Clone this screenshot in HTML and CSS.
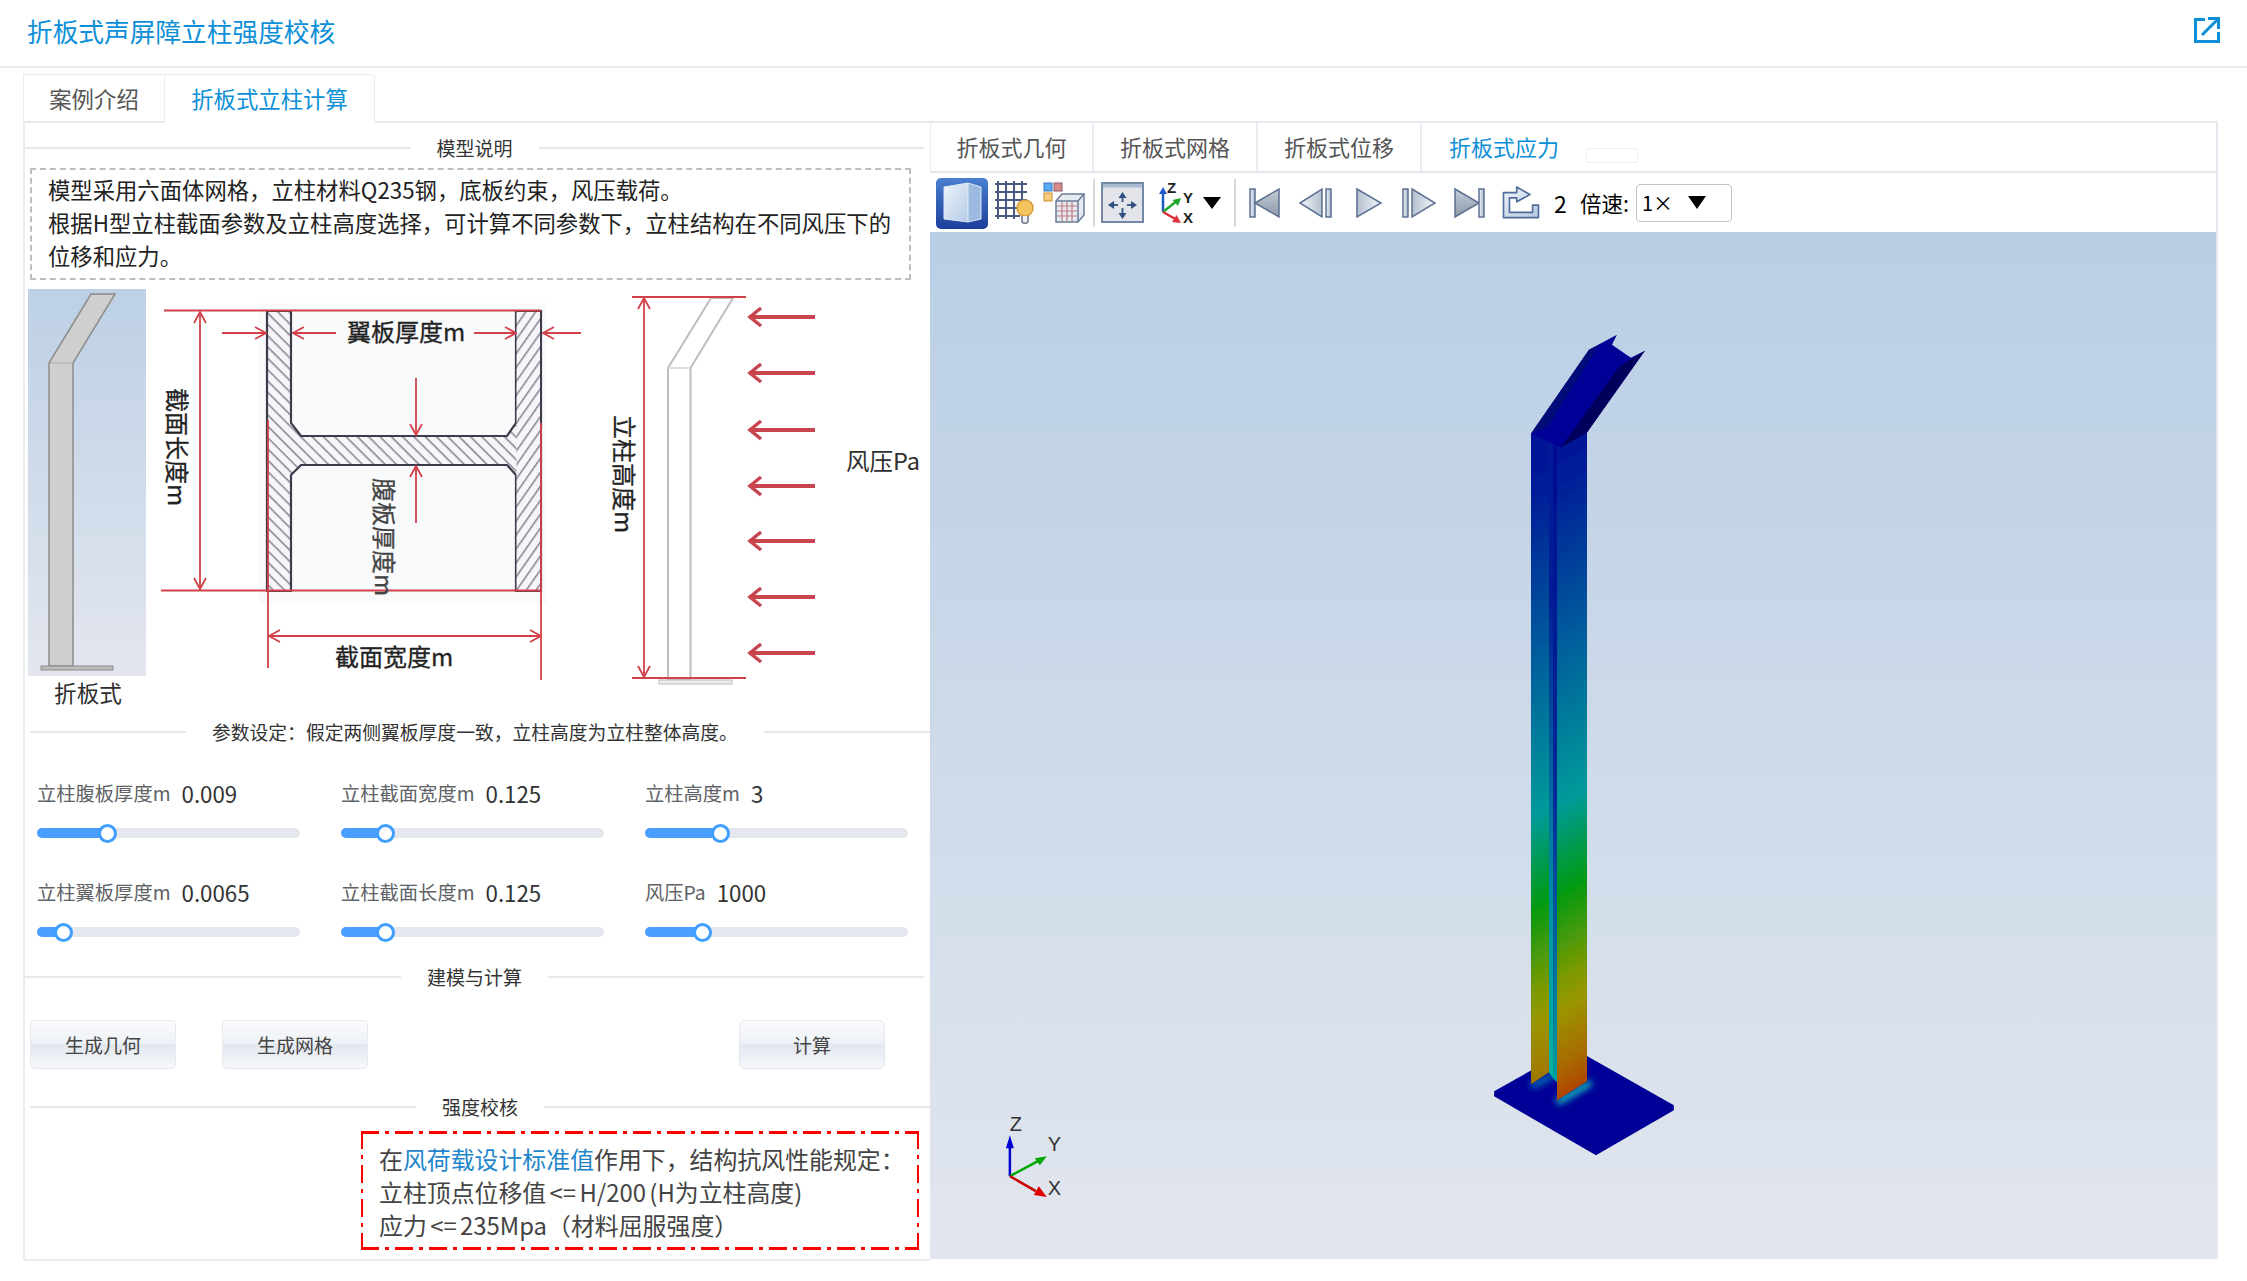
FILE: index.html
```html
<!DOCTYPE html>
<html lang="zh">
<head>
<meta charset="utf-8">
<title>折板式声屏障立柱强度校核</title>
<link rel="stylesheet" href="styles.css">
</head>
<body>
<header class="top">
  <h1 class="title">折板式声屏障立柱强度校核</h1>
  <svg class="open-icon" viewBox="0 0 26 26"><path d="M11 2.500H1.500V24.500H24.500V15" fill="none" stroke="#0d8fd8" stroke-width="3"/><path d="M8 18L23 3M14 1.500H24.500V12" fill="none" stroke="#0d8fd8" stroke-width="3"/></svg>
</header>
<nav class="main-tabs">
  <div class="tab">案例介绍</div>
  <div class="tab tab-on">折板式立柱计算</div>
</nav>
<main class="work">
  <section class="left">
    <div class="divider d-model"><span class="line"></span><span class="dt">模型说明</span><span class="line"></span></div>
    <div class="intro">模型采用六面体网格，立柱材料Q235钢，底板约束，风压载荷。<br>根据H型立柱截面参数及立柱高度选择，可计算不同参数下，立柱结构在不同风压下的<br>位移和应力。</div>

    <svg class="figure" viewBox="24 285 906 427">
      <defs>
        <linearGradient id="thumbBg" x1="0" y1="0" x2="0" y2="1"><stop offset="0" stop-color="#bdd0e6"/><stop offset="1" stop-color="#e3e6ee"/></linearGradient>
        <pattern id="hatch" width="8" height="8" patternUnits="userSpaceOnUse" patternTransform="rotate(45)"><rect width="8" height="8" fill="#f6f5f9"/><rect width="8" height="1.500" fill="#85828f"/></pattern>
        <pattern id="hatchB" width="8" height="8" patternUnits="userSpaceOnUse" patternTransform="rotate(-55)"><rect width="8" height="8" fill="#f6f5f9"/><rect width="8" height="1.500" fill="#85828f"/></pattern>
        <marker id="aEnd" viewBox="0 0 14 14" refX="13" refY="7" markerWidth="14" markerHeight="14" orient="auto-start-reverse" markerUnits="userSpaceOnUse"><path d="M2 1L13 7L2 13" fill="none" stroke="#d2404a" stroke-width="1.800"/></marker>
        <marker id="aBig" viewBox="0 0 18 22" refX="16" refY="11" markerWidth="18" markerHeight="22" orient="auto" markerUnits="userSpaceOnUse"><path d="M4 2L15 11L4 20" fill="none" stroke="#c9454f" stroke-width="3.500"/></marker>
      </defs>

      <rect x="27" y="289" width="118" height="387" fill="url(#thumbBg)"/>
      <path d="M48 363L90 294H114L72 363V666H48Z" fill="#cfcfcf" stroke="#8c8c8c" stroke-width="1.500"/>
      <path d="M48 363H72" stroke="#aaa" stroke-width="1"/>
      <rect x="40" y="666" width="72" height="4" fill="#bdbdbd" stroke="#8c8c8c"/>
      <text class="fig-cap" x="87" y="702" text-anchor="middle">折板式</text>

      <rect x="258" y="303" width="288" height="300" fill="#f9fafc"/>
      <path d="M266 311H290V423L300 436H506L515 423V311H540V591H515V475L506 465H300L290 475V591H266Z" fill="url(#hatch)" stroke="#3e3c4c" stroke-width="2.200"/>
      <path d="M515.500 312H539V590H515.500Z" fill="url(#hatchB)"/>
      <g class="red-thin">
        <path d="M163 310.500H540M160 590.500H540M267 420V668M540 423V680"/>
        <path d="M199 312V589" marker-start="url(#aEnd)" marker-end="url(#aEnd)"/>
        <path d="M221 333H265" marker-end="url(#aEnd)"/>
        <path d="M335 333H292" marker-end="url(#aEnd)"/>
        <path d="M473 333H515" marker-end="url(#aEnd)"/>
        <path d="M580 333H542" marker-end="url(#aEnd)"/>
        <path d="M415 378V435" marker-end="url(#aEnd)"/>
        <path d="M415 523V466" marker-end="url(#aEnd)"/>
        <path d="M268 636H540" marker-start="url(#aEnd)" marker-end="url(#aEnd)"/>
      </g>
      <text class="fig-text" x="346" y="341">翼板厚度m</text>
      <text class="fig-text" x="334" y="666">截面宽度m</text>
      <text class="fig-text" transform="translate(167 388) rotate(90)">截面长度m</text>
      <text class="fig-text fig-gray" transform="translate(374 478) rotate(90)">腹板厚度m</text>
      <text class="fig-text" transform="translate(614 415) rotate(90)">立柱高度m</text>

      <path d="M667 368L710 298H732L689.500 368V679H667Z" fill="#fff" stroke="#bdbdbd" stroke-width="2"/>
      <path d="M667 368H689" stroke="#ddd" stroke-width="2"/>
      <rect x="658" y="680" width="73" height="4" fill="#eee" stroke="#bbb"/>
      <g class="red-thin">
        <path d="M631 297H745M631 678H745"/>
        <path d="M643 298V677" marker-start="url(#aEnd)" marker-end="url(#aEnd)"/>
      </g>
      <g class="wind">
        <path d="M814 317H748" marker-end="url(#aBig)"/>
        <path d="M814 373H748" marker-end="url(#aBig)"/>
        <path d="M814 430H748" marker-end="url(#aBig)"/>
        <path d="M814 486H748" marker-end="url(#aBig)"/>
        <path d="M814 541H748" marker-end="url(#aBig)"/>
        <path d="M814 597H748" marker-end="url(#aBig)"/>
        <path d="M814 653H748" marker-end="url(#aBig)"/>
      </g>
      <text class="fig-cap fig-wind" x="845" y="470">风压Pa</text>
    </svg>

    <div class="divider d-params"><span class="line"></span><span class="dt">参数设定：假定两侧翼板厚度一致，立柱高度为立柱整体高度。</span><span class="line"></span></div>

    <div class="sliders">
      <div class="slider"><div class="s-head"><span class="s-label">立柱腹板厚度m</span><span class="s-val">0.009</span></div><div class="track"><div class="fill" style="width:70px"></div><span class="knob"></span></div></div>
      <div class="slider"><div class="s-head"><span class="s-label">立柱截面宽度m</span><span class="s-val">0.125</span></div><div class="track"><div class="fill" style="width:44px"></div><span class="knob"></span></div></div>
      <div class="slider"><div class="s-head"><span class="s-label">立柱高度m</span><span class="s-val">3</span></div><div class="track"><div class="fill" style="width:75px"></div><span class="knob"></span></div></div>
      <div class="slider"><div class="s-head"><span class="s-label">立柱翼板厚度m</span><span class="s-val">0.0065</span></div><div class="track"><div class="fill" style="width:26px"></div><span class="knob"></span></div></div>
      <div class="slider"><div class="s-head"><span class="s-label">立柱截面长度m</span><span class="s-val">0.125</span></div><div class="track"><div class="fill" style="width:44px"></div><span class="knob"></span></div></div>
      <div class="slider"><div class="s-head"><span class="s-label">风压Pa</span><span class="s-val">1000</span></div><div class="track"><div class="fill" style="width:57px"></div><span class="knob"></span></div></div>
    </div>

    <div class="divider d-build"><span class="line"></span><span class="dt">建模与计算</span><span class="line"></span></div>
    <div class="actions">
      <button class="btn">生成几何</button>
      <button class="btn">生成网格</button>
      <button class="btn btn-end">计算</button>
    </div>
    <div class="divider d-check"><span class="line"></span><span class="dt">强度校核</span><span class="line"></span></div>
    <div class="notice">在<span class="link">风荷载设计标准值</span>作用下，结构抗风性能规定：<br>立柱顶点位移值 &lt;= H/200 (H为立柱高度)<br>应力 &lt;= 235Mpa（材料屈服强度）</div>
  </section>

  <section class="right">
    <div class="sub-tabs">
      <div class="sub-tab">折板式几何</div>
      <div class="sub-tab">折板式网格</div>
      <div class="sub-tab">折板式位移</div>
      <div class="sub-tab sub-on">折板式应力</div>
      <div class="sub-stub"></div>
    </div>
    <div class="toolbar">
      <svg class="tool t-view" viewBox="0 0 52 51">
        <defs>
          <linearGradient id="viewBg" x1="0" y1="0" x2="0" y2="1"><stop offset="0" stop-color="#4a7fd0"/><stop offset="1" stop-color="#1d3f9c"/></linearGradient>
          <linearGradient id="faceA" x1="0" y1="0" x2="1" y2="1"><stop offset="0" stop-color="#eef4fb"/><stop offset="1" stop-color="#b4cbe6"/></linearGradient>
          <linearGradient id="navDark" x1="0" y1="0" x2="0" y2="1"><stop offset="0" stop-color="#c4ccd6"/><stop offset="1" stop-color="#8c98a8"/></linearGradient>
          <linearGradient id="navLight" x1="0" y1="0" x2="1" y2="0"><stop offset="0" stop-color="#f2f5f9"/><stop offset="1" stop-color="#b4c0d0"/></linearGradient>
          <linearGradient id="navLightR" x1="0" y1="0" x2="1" y2="0"><stop offset="0" stop-color="#b4c0d0"/><stop offset="1" stop-color="#f2f5f9"/></linearGradient>
          <linearGradient id="barFill" x1="0" y1="0" x2="1" y2="0"><stop offset="0" stop-color="#eef2f7"/><stop offset="1" stop-color="#aab8cc"/></linearGradient>
          <linearGradient id="expFill" x1="0" y1="0" x2="1" y2="1"><stop offset="0" stop-color="#f0f4f9"/><stop offset="1" stop-color="#b4c8e2"/></linearGradient>
        </defs>
        <rect width="52" height="51" rx="5" fill="url(#viewBg)"/>
        <path d="M8 9L32 5V44L8 41Z" fill="url(#faceA)" stroke="#dbe6f4"/>
        <path d="M32 5L45 9V41L32 44Z" fill="#9dbbe0" stroke="#dbe6f4"/>
      </svg>
      <svg class="tool t-mesh" viewBox="0 0 41 43">
        <path d="M1 3H33M1 11H33M1 19H33M1 27H30M1 35H26M4 0V38M12 0V38M20 0V38M28 0V30" fill="none" stroke="#48587e" stroke-width="2"/>
        <circle cx="31" cy="27" r="8" fill="#f3c45c" stroke="#d89a3c" stroke-width="1.500"/>
        <path d="M28 35V40C28 43 34 43 34 40V35" fill="#eef0f4" stroke="#6b7286" stroke-width="1.500"/>
      </svg>
      <svg class="tool t-cube" viewBox="0 0 43 41">
        <rect x="1" y="1" width="8" height="8" fill="#5aaaf0" stroke="#3a78c0"/>
        <rect x="11" y="1" width="8" height="8" fill="#d88a8a" stroke="#8a5a6a"/>
        <rect x="1" y="11" width="8" height="8" fill="#f5cf80" stroke="#d88a30"/>
        <path d="M13 19L19 12H41V33L35 40H13Z" fill="#e6ebf2" stroke="#6b7b94" stroke-width="1.500"/>
        <path d="M13 19H35V40M35 19L41 12" fill="none" stroke="#6b7b94" stroke-width="1.500"/>
        <path d="M14 24H34M14 29H34M14 34H34M19 20V39M24 20V39M29 20V39" stroke="#bf7a80" stroke-width="1.200"/>
      </svg>
      <span class="tool-sep s-a"></span>
      <svg class="tool t-fit" viewBox="0 0 43 41">
        <rect x="1" y="1" width="41" height="39" fill="#e2e4ea" stroke="#7488a8" stroke-width="2"/>
        <rect x="2" y="2" width="39" height="3.500" fill="#a9b9d2"/>
        <path d="M21.500 14V20M21.500 26V32M11 23H17M26 23H32" stroke="#3f5e8a" stroke-width="2"/>
        <path d="M21.500 10L25.500 16H17.500ZM21.500 37L25.500 31H17.500ZM7 23L13 19V27ZM36 23L30 19V27Z" fill="#2f4f7e"/>
      </svg>
      <svg class="tool t-axes" viewBox="0 0 35 42">
        <path d="M4 30V10" stroke="#1f5ac8" stroke-width="2.500"/><path d="M4 5L8 12H0Z" fill="#1f5ac8"/>
        <path d="M4 30L19 18" stroke="#1ea82a" stroke-width="2.500"/><path d="M22 16L19 24L13.500 18Z" fill="#1ea82a"/>
        <path d="M4 30L18 38" stroke="#e0303a" stroke-width="2.500"/><path d="M22 41L13 40L17.500 33Z" fill="#e0303a"/>
        <text class="axis-mini" x="8" y="11">Z</text><text class="axis-mini" x="24" y="21">Y</text><text class="axis-mini" x="24" y="41">X</text>
      </svg>
      <svg class="tool t-tri" viewBox="0 0 18 12"><path d="M0 0H18L9 12Z" fill="#000"/></svg>
      <span class="tool-sep s-b"></span>
      <svg class="tool t-nav t-first" viewBox="0 0 31 30"><rect x="1" y="1" width="5" height="28" fill="url(#barFill)" stroke="#5c7092" stroke-width="1.500"/><path d="M6 15L30 1V29Z" fill="url(#navDark)" stroke="#5c7092" stroke-width="1.500"/></svg>
      <svg class="tool t-nav t-prev" viewBox="0 0 34 30"><path d="M1 15L23 1V29Z" fill="url(#navLight)" stroke="#5c7092" stroke-width="1.500"/><rect x="27" y="1" width="5" height="28" fill="url(#barFill)" stroke="#5c7092" stroke-width="1.500"/></svg>
      <svg class="tool t-nav t-play" viewBox="0 0 26 30"><path d="M1 1L25 15L1 29Z" fill="url(#navLightR)" stroke="#5c7092" stroke-width="1.500"/></svg>
      <svg class="tool t-nav t-next" viewBox="0 0 34 30"><rect x="1" y="1" width="5" height="28" fill="url(#barFill)" stroke="#5c7092" stroke-width="1.500"/><path d="M10 1L33 15L10 29Z" fill="url(#navLightR)" stroke="#5c7092" stroke-width="1.500"/></svg>
      <svg class="tool t-nav t-last" viewBox="0 0 31 30"><path d="M1 1L25 15L1 29Z" fill="url(#navDark)" stroke="#5c7092" stroke-width="1.500"/><rect x="25" y="1" width="5" height="28" fill="url(#barFill)" stroke="#5c7092" stroke-width="1.500"/></svg>
      <svg class="tool t-export" viewBox="8 12 114 100"><path d="M12 32H52V15L92 38L52 60V48H30V92H100V70H118V108H12Z" fill="url(#expFill)" stroke="#4f6d9a" stroke-width="5" stroke-linejoin="round"/></svg>
      <span class="frame">2</span>
      <span class="speed">倍速:</span>
      <div class="select"><span class="sel-val">1×</span><svg class="sel-tri" viewBox="0 0 18 13"><path d="M0 0H18L9 13Z" fill="#000"/></svg></div>
    </div>
    <div class="viewport">
      <svg class="scene" viewBox="930 232 1288 1029" preserveAspectRatio="none">
        <defs>
          <linearGradient id="stressR" gradientUnits="userSpaceOnUse" x1="1573" y1="340" x2="1910" y2="902">
            <stop offset="0" stop-color="#000096"/><stop offset="0.18" stop-color="#001e98"/><stop offset="0.38" stop-color="#005a9c"/><stop offset="0.6" stop-color="#009a9a"/><stop offset="0.72" stop-color="#059a10"/><stop offset="0.83" stop-color="#7c9a02"/><stop offset="0.87" stop-color="#9a9600"/><stop offset="0.94" stop-color="#a86c00"/><stop offset="0.985" stop-color="#b04600"/>
          </linearGradient>
          <linearGradient id="stressL" gradientUnits="userSpaceOnUse" x1="1541" y1="357" x2="1878" y2="919">
            <stop offset="0" stop-color="#000096"/><stop offset="0.18" stop-color="#001e98"/><stop offset="0.38" stop-color="#005a9c"/><stop offset="0.6" stop-color="#009a9a"/><stop offset="0.72" stop-color="#059a10"/><stop offset="0.83" stop-color="#7c9a02"/><stop offset="0.87" stop-color="#9a9600"/><stop offset="0.94" stop-color="#a07a00"/><stop offset="0.985" stop-color="#b05000"/>
          </linearGradient>
          <linearGradient id="webLight" gradientUnits="userSpaceOnUse" x1="0" y1="600" x2="0" y2="1085">
            <stop offset="0" stop-color="#001c96"/><stop offset="0.4" stop-color="#006ea0"/><stop offset="0.7" stop-color="#009aa0"/><stop offset="1" stop-color="#00b4a0"/>
          </linearGradient>
          <linearGradient id="webDark" gradientUnits="userSpaceOnUse" x1="0" y1="440" x2="0" y2="1085">
            <stop offset="0" stop-color="#000c92"/><stop offset="0.55" stop-color="#002a96"/><stop offset="0.8" stop-color="#0068a0"/><stop offset="1" stop-color="#00a0a0"/>
          </linearGradient>
          <filter id="soft" x="-5%" y="-5%" width="110%" height="110%"><feGaussianBlur stdDeviation="0.600"/></filter>
          <filter id="glowBlur" x="-50%" y="-100%" width="200%" height="300%"><feGaussianBlur stdDeviation="3.500"/></filter>
        </defs>
        <g filter="url(#soft)">
          <path d="M1495 1093L1573 1049L1675 1107V1112L1597 1157L1495 1098Z" fill="#000096"/>
        </g>
        <path class="glow-a" d="M1558 1104L1592 1084" filter="url(#glowBlur)"/>
        <path class="glow-b" d="M1532 1088L1556 1076" filter="url(#glowBlur)"/>
        <g filter="url(#soft)">
          <path d="M1532 434L1558 425L1588 433V1083L1558 1102V1081L1550 1074L1532 1086Z" fill="#000a96"/>
          <path d="M1532 434H1550V1074L1532 1086Z" fill="url(#stressL)"/>
          <path d="M1550 434H1554V1080L1550 1074Z" fill="url(#webLight)"/>
          <path d="M1554 434H1558V1084L1554 1080Z" fill="url(#webDark)"/>
          <path d="M1558 434H1588V1083L1558 1102Z" fill="url(#stressR)"/>
          <path d="M1532 434L1590 350L1618 335L1613 345L1632 358L1646 351L1588 433L1562 448Z" fill="#000096"/>
          <path d="M1562 448L1620 367L1646 351L1588 433Z" fill="#00065c"/>
          <path d="M1532 434L1590 350L1600 345L1549 427Z" fill="#000c78"/>
        </g>
        <g class="triad">
          <path d="M1010 1178V1145" stroke="#0000d0" stroke-width="2.500"/><path d="M1010 1137L1014 1150H1006Z" fill="#0000d0"/>
          <path d="M1010 1178L1038 1163" stroke="#00a800" stroke-width="2.500"/><path d="M1047 1158L1040 1167L1035 1160Z" fill="#00a800"/>
          <path d="M1010 1178L1036 1193" stroke="#c80000" stroke-width="2.500"/><path d="M1047 1199L1034 1197L1039 1188Z" fill="#e00000"/>
          <text class="axis-label" x="1010" y="1133">Z</text><text class="axis-label" x="1048" y="1153">Y</text><text class="axis-label" x="1048" y="1197">X</text>
        </g>
      </svg>
    </div>
  </section>
</main>
</body>
</html>
```
FILE: styles.css
```css
* { box-sizing: border-box; }
html, body { margin: 0; padding: 0; }
body {
  width: 2247px;
  height: 1281px;
  overflow: hidden;
  background: #fff;
  font-family: "Noto Sans CJK SC", "Noto Sans", sans-serif;
  color: #333;
}

.top {
  height: 68px;
  border-bottom: 2px solid #ececf0;
  padding: 0 27px;
  display: flex;
  align-items: center;
  justify-content: space-between;
}
.title { margin: 0 0 4px; font-size: 25.700px; font-weight: 400; color: #0d8fd8; line-height: 36px; }
.open-icon { width: 26px; height: 26px; margin-bottom: 6px; }

.main-tabs { display: flex; margin: 6px 0 0 23px; height: 49px; width: 2195px; border-bottom: 2px solid #e6e6ee; }
.tab {
  width: 142px;
  height: 49px;
  border: 1px solid #ececf0;
  border-bottom: 2px solid #e6e6ee;
  background: #fff;
  text-align: center;
  font-size: 22.400px;
  line-height: 46px;
  color: #555;
}
.tab + .tab { border-left: 0; }
.tab-on { width: 210px; color: #0d8fd8; border-bottom-color: #fff; border-top-right-radius: 3px; }

.work { display: flex; margin-left: 23px; width: 2195px; height: 1138px; }

.left {
  width: 907px;
  height: 1138px;
  border-left: 2px solid #ececf0;
  border-bottom: 2px solid #ececf0;
  display: flex;
  flex-direction: column;
}

.divider { display: flex; align-items: center; height: 20px; font-size: 19px; color: #333; flex: none; }
.divider .line { flex: 1; height: 2px; background: #e8e8ee; }
.dt { padding: 0 26px; line-height: 20px; white-space: nowrap; }
.d-model { margin-top: 15px; width: 899px; }
.d-params { margin-top: 10px; margin-left: 5px; font-size: 18.800px; }
.d-params .line:first-child { flex: 0 0 156px; }
.d-build { margin-top: 26px; width: 899px; }
.d-check { margin-top: 28px; margin-left: 5px; }

.intro {
  margin: 10px 0 0 5px;
  width: 881px;
  height: 112px;
  flex: none;
  border: 2px dashed #bdbdc2;
  padding: 3px 0 0 16px;
  font-size: 22.350px;
  line-height: 33px;
  color: #222;
  white-space: nowrap;
}

.figure { display: block; width: 906px; height: 427px; margin-top: 5px; flex: none; }
.fig-text { font-size: 24px; font-weight: 400; fill: #222; stroke: #222; stroke-width: 0.300px; font-family: "Noto Sans CJK SC", sans-serif; }
.fig-cap { font-size: 22.600px; fill: #2e2e2e; font-family: "Noto Sans CJK SC", sans-serif; }
.fig-wind { font-size: 23.500px; }
.fig-gray { fill: #444; stroke: #444; }
.red-thin path { fill: none; stroke: #d2404a; stroke-width: 1.800; }
.wind path { fill: none; stroke: #c9454f; stroke-width: 4; }

.sliders {
  display: grid;
  grid-template-columns: repeat(3, 263px);
  column-gap: 41px;
  row-gap: 35px;
  margin: 36px 0 0 12px;
  flex: none;
}
.s-head { height: 30px; display: flex; align-items: center; gap: 11px; }
.s-label { font-size: 19.300px; color: #606266; white-space: nowrap; }
.s-val { font-size: 22.300px; color: #333; }
.track { position: relative; display: flex; align-items: center; height: 10px; margin: 20px 0 4px; background: #e4e7ed; border-radius: 5px; }
.fill { height: 10px; background: #4a9eff; border-radius: 5px 0 0 5px; }
.knob { width: 19px; height: 19px; margin-left: -9px; border: 3px solid #409eff; border-radius: 50%; background: #fff; flex: none; }

.actions { display: flex; gap: 46px; margin-top: 33px; padding: 0 45px 0 5px; height: 49px; flex: none; }
.btn {
  width: 146px;
  height: 49px;
  border: 1px solid #e6e9ef;
  border-radius: 5px;
  background: linear-gradient(#fafbfd 0%, #eef1f6 49%, #e2e7ef 50%, #f6f8fb 100%);
  font-family: inherit;
  font-size: 19px;
  color: #444;
  padding: 0;
}
.btn-end { margin-left: auto; }

.notice {
  width: 558px;
  height: 119px;
  flex: none;
  margin: 14px 0 0 336px;
  padding: 11px 0 0 18px;
  font-size: 23.900px;
  word-spacing: -2px;
  line-height: 33px;
  color: #444;
  white-space: nowrap;
  background:
    repeating-linear-gradient(90deg, #f00 0 18px, transparent 18px 24px, #f00 24px 28px, transparent 28px 34px) top left / 100% 3px no-repeat,
    repeating-linear-gradient(90deg, #f00 0 18px, transparent 18px 24px, #f00 24px 28px, transparent 28px 34px) bottom left / 100% 3px no-repeat,
    repeating-linear-gradient(180deg, #f00 0 18px, transparent 18px 24px, #f00 24px 28px, transparent 28px 34px) top left / 2px 100% no-repeat,
    repeating-linear-gradient(180deg, #f00 0 18px, transparent 18px 24px, #f00 24px 28px, transparent 28px 34px) top right / 2px 100% no-repeat;
}
.link { color: #1f86cc; }

.right {
  width: 1288px;
  height: 1136px;
  display: flex;
  flex-direction: column;
  border-right: 2px solid #e6e6ee;
}
.sub-tabs { display: flex; align-items: flex-end; height: 50px; border-bottom: 2px solid #e6e6ee; flex: none; }
.sub-tab {
  width: 164px;
  height: 48px;
  border-right: 2px solid #ececf0;
  text-align: center;
  font-size: 22px;
  line-height: 47px;
  color: #555;
}
.sub-tab:first-child { border-left: 1px solid #ececf0; }
.sub-on { color: #0d8fd8; border-right: 0; }
.sub-stub { width: 52px; height: 15px; margin: 0 0 8px 0; border: 1px solid #eeeef2; border-radius: 2px; }

.toolbar { display: flex; align-items: center; height: 59px; padding-left: 6px; flex: none; }
.tool { display: block; flex: none; overflow: visible; }
.t-view { width: 52px; height: 51px; margin-top: 2px; }
.t-mesh { width: 41px; height: 43px; margin-left: 6px; }
.t-cube { width: 43px; height: 41px; margin-left: 8px; }
.tool-sep { width: 2px; height: 48px; background: #d8d8dc; flex: none; }
.s-a { margin-left: 7px; }
.t-fit { width: 43px; height: 41px; margin-left: 6px; }
.t-axes { width: 35px; height: 42px; margin-left: 15px; }
.t-tri { width: 18px; height: 12px; margin-left: 9px; }
.s-b { margin-left: 13px; }
.t-nav { height: 30px; }
.t-first { width: 31px; margin-left: 13px; }
.t-prev { width: 34px; margin-left: 19px; }
.t-play { width: 26px; margin-left: 23px; }
.t-next { width: 34px; margin-left: 20px; }
.t-last { width: 31px; margin-left: 18px; }
.t-export { width: 38px; height: 33px; margin-left: 17px; }
.axis-mini { font: 700 15px "Liberation Sans", sans-serif; fill: #222; }
.frame { margin-left: 14px; font-size: 23px; color: #000; width: 26px; flex: none; }
.speed { font-size: 21.500px; color: #000; width: 56px; flex: none; white-space: nowrap; }
.select {
  width: 96px;
  height: 38px;
  border: 1px solid #c4c4c8;
  border-radius: 4px;
  display: flex;
  align-items: center;
  padding-left: 5px;
  font-size: 20px;
  color: #000;
  flex: none;
}
.sel-val { width: 46px; }
.sel-tri { width: 18px; height: 13px; display: block; }

.viewport { flex: 1; background: linear-gradient(#b9cee5 0%, #e2e6ee 100%); min-height: 0; }
.scene { display: block; width: 100%; height: 100%; }
.glow-a { fill: none; stroke: #19d0c0; stroke-width: 6; }
.glow-b { fill: none; stroke: #0a90c0; stroke-width: 5; }
.axis-label { font: 400 20px "Liberation Sans", sans-serif; fill: #333; }
```
